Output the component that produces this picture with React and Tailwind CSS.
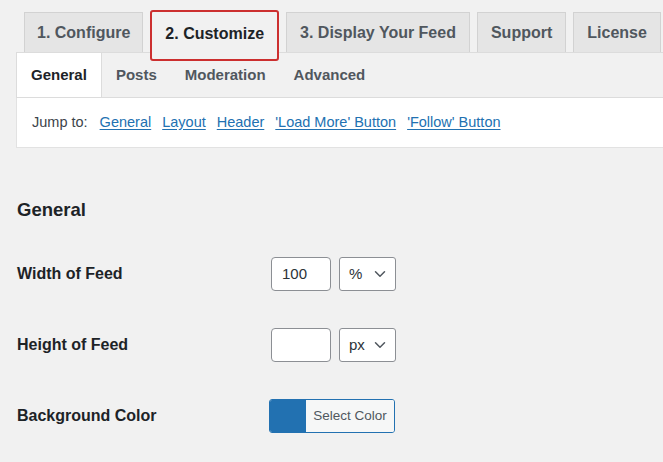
import { ChevronDown } from 'lucide-react';

const font = { fontFamily: '"Liberation Sans", Arial, sans-serif' };

function Tab({ label, active, first }) {
    if (active) {
        return (
            <div className="relative z-10 -mt-[2px] h-[51px] px-[13px] flex items-start pt-[10px] bg-[#f1f1f1] border-2 border-[#cc2f2f] rounded-[3px] text-[16px] font-bold text-[#1d2327]">
                {label}
            </div>
        );
    }
    return (
        <div className={`h-[40px] ${first ? 'px-[12px]' : 'px-[13px]'} flex items-center bg-[#e5e5e5] border border-[#d2d2d2] border-b-0 text-[16px] font-bold text-[#50575e]`}>
            {label}
        </div>
    );
}

function Select({ value }) {
    return (
        <div className="w-[57px] h-[34px] border border-[#8c8f94] rounded-[3px] bg-white flex items-center justify-between pl-[9px] pr-[6px] text-[15px] text-[#2c3338]">
            <span>{value}</span>
            <ChevronDown size={18} strokeWidth={2} className="text-[#50575e]" />
        </div>
    );
}

function Row({ label, children }) {
    return (
        <div className="flex items-center h-[35px]">
            <div className="w-[254px] text-[16px] font-bold text-[#1d2327]">{label}</div>
            <div className="flex items-center gap-[8px]">{children}</div>
        </div>
    );
}

export default function App() {
    const subtabs = ['General', 'Posts', 'Moderation', 'Advanced'];
    const links = ['General', 'Layout', 'Header', "'Load More' Button", "'Follow' Button"];

    return (
        <div className="w-[663px] h-[462px] overflow-hidden bg-[#f1f1f1]" style={font}>
            {/* top tabs */}
            <div className="pt-[12px] pl-[24px] h-[52px] flex items-start gap-[7px]">
                <Tab label="1. Configure" first />
                <Tab label="2. Customize" active />
                <Tab label="3. Display Your Feed" />
                <Tab label="Support" />
                <Tab label="License" />
            </div>

            {/* sub tabs */}
            <div className="ml-[16px] h-[46px] flex border-t border-l border-b border-[#dcdcdc] bg-[#f1f1f1]">
                {subtabs.map((t, i) => (
                    <div
                        key={t}
                        className={`h-full flex items-center px-[14px] text-[15px] font-bold ${i === 0
                            ? 'bg-white text-[#1d2327] border-r border-[#dcdcdc]'
                            : 'text-[#50575e]'
                            }`}
                    >
                        {t}
                    </div>
                ))}
            </div>

            {/* jump to */}
            <div className="ml-[16px] h-[50px] bg-white border-l border-b border-[#e2e2e2] flex items-center pl-[15px] gap-[11px] text-[14.5px]">
                <span className="text-[#3c434a] mr-[1px]">Jump to:</span>
                {links.map(l => (
                    <a key={l} href="#" className="text-[#2271b1] underline underline-offset-[2px]">{l}</a>
                ))}
            </div>

            {/* settings */}
            <div className="pl-[17px] pt-[53px]">
                <h2 className="text-[18.5px] font-bold text-[#1d2327] leading-none">General</h2>
                <div className="mt-[37px] flex flex-col gap-[36px]">
                    <Row label="Width of Feed">
                        <div className="w-[60px] h-[34px] border border-[#8c8f94] rounded-[4px] bg-white flex items-center pl-[10px] text-[15px] text-[#2c3338]">100</div>
                        <Select value="%" />
                    </Row>
                    <Row label="Height of Feed">
                        <div className="w-[60px] h-[34px] border border-[#8c8f94] rounded-[4px] bg-white" />
                        <Select value="px" />
                    </Row>
                    <Row label="Background Color">
                        <div className="-ml-[2px] w-[126px] h-[34px] border border-[#2271b1] rounded-[3px] flex overflow-hidden">
                            <div className="w-[36px] bg-[#2271b1]" />
                            <div className="flex-1 bg-[#f6f7f7] flex items-center justify-center text-[13.5px] text-[#50575e]">Select Color</div>
                        </div>
                    </Row>
                </div>
            </div>
        </div>
    );
}
